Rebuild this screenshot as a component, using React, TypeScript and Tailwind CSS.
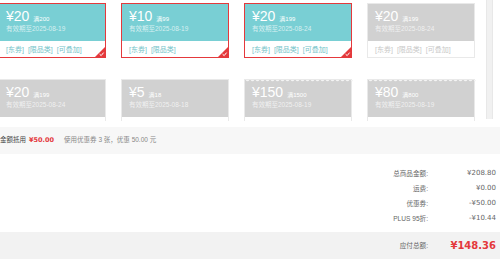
import React from "react";

type Coupon = {
  amount: string;
  cond: string;
  date: string;
  tags: string[];
  selected?: boolean;
  gray?: boolean;
  wave?: boolean;
};

const row1: Coupon[] = [
  { amount: "¥20", cond: "满200", date: "有效期至2025-08-19", tags: ["[东券]", "[限品类]", "[可叠加]"], selected: true },
  { amount: "¥10", cond: "满99", date: "有效期至2025-08-19", tags: ["[东券]", "[限品类]"], selected: true },
  { amount: "¥20", cond: "满199", date: "有效期至2025-08-24", tags: ["[东券]", "[限品类]", "[可叠加]"], selected: true },
  { amount: "¥20", cond: "满199", date: "有效期至2025-08-24", tags: ["[东券]", "[限品类]", "[可叠加]"], gray: true },
];

const row2: Coupon[] = [
  { amount: "¥20", cond: "满199", date: "有效期至2025-08-24", tags: [], gray: true },
  { amount: "¥5", cond: "满18", date: "有效期至2025-08-18", tags: [], gray: true },
  { amount: "¥150", cond: "满1500", date: "有效期至2025-08-19", tags: [], gray: true, wave: true },
  { amount: "¥80", cond: "满800", date: "有效期至2025-08-19", tags: [], gray: true, wave: true },
];

function Wave() {
  const circles = [];
  for (let i = 0; i < 23; i++) {
    circles.push(<circle key={i} cx={2.5 + i * 5} cy={-0.6} r={1.8} fill="#f4f4f4" />);
  }
  return (
    <svg className="absolute top-0 left-0" width="108" height="2" viewBox="0 0 108 2">
      {circles}
    </svg>
  );
}

function Corner() {
  return (
    <svg className="absolute bottom-0 right-0" width="10" height="10" viewBox="0 0 10 10">
      <polygon points="10,0 10,10 0,10" fill="#e4393c" />
      <polyline points="4.6,7.2 6.2,8.6 8.6,5.6" fill="none" stroke="#ffffff" strokeWidth="1" />
    </svg>
  );
}

function Card({ c }: { c: Coupon }) {
  const top = c.gray ? "bg-[#d1d1d1]" : "bg-[#79cfd4]";
  const border = c.selected ? "border-[#e4393c]" : "border-[#e9e9e9]";
  const tagColor = c.gray ? "text-[#c8c8c8]" : "text-[#74c3c9]";
  return (
    <div className={`relative w-[108px] h-[55px] shrink-0 border ${border} flex flex-col`}>
      <div className={`relative h-[37px] ${top} px-[7px] pt-[5px] text-white`}>
        {c.wave && <Wave />}
        <div className="flex items-baseline gap-[4px] leading-none">
          <span className="text-[14px]">{c.amount}</span>
          <span className="text-[6px]">{c.cond}</span>
        </div>
        <div className="text-[6.5px] mt-[3px] leading-none text-white/70">{c.date}</div>
      </div>
      <div className={`flex-1 bg-white flex items-center gap-[4px] px-[7px] text-[7px] leading-none ${tagColor}`}>
        {c.tags.map((t, i) => (
          <span key={i}>{t}</span>
        ))}
      </div>
      {c.selected && <Corner />}
    </div>
  );
}

function SumRow({ label, value }: { label: string; value: string }) {
  return (
    <div className="h-[15px] flex items-center justify-end pr-[4px]">
      <span className="text-[6.6px] text-[#666]">{label}</span>
      <span className="w-[68px] text-right text-[7px] text-[#666] font-['DejaVu_Sans',sans-serif]">{value}</span>
    </div>
  );
}

export default function App() {
  return (
    <div className="w-[500px] h-[259px] bg-white overflow-hidden font-['Liberation_Sans','Noto_Sans_CJK_SC',sans-serif]">
      <div className="flex h-[121px]">
        <div className="w-[486px] h-[121px] overflow-hidden pt-[3px]">
          <div className="flex flex-col gap-[21px] ml-[-2px]">
            <div className="flex gap-[15px]">
              {row1.map((c, i) => (
                <Card key={i} c={c} />
              ))}
            </div>
            <div className="flex gap-[15px]">
              {row2.map((c, i) => (
                <Card key={i} c={c} />
              ))}
            </div>
          </div>
        </div>
        <div className="w-[7px] h-[119px] bg-[#f1f1f1] border-x border-[#e8e8e8]" />
      </div>
      <div className="h-[6px]" />
      <div className="h-[27px] bg-[#f7f7f7] flex items-center text-[6.5px] leading-none">
        <span className="text-[#444]">金额抵用</span>
        <span className="ml-[3px] text-[#e4393c] font-bold font-['DejaVu_Sans',sans-serif]">¥50.00</span>
        <span className="ml-[10px] text-[#888]">使用优惠券 3 张，优惠 50.00 元</span>
      </div>
      <div className="pt-[12px] flex flex-col">
        <SumRow label="总商品金额:" value="¥208.80" />
        <SumRow label="运费:" value="¥0.00" />
        <SumRow label="优惠券:" value="-¥50.00" />
        <SumRow label="PLUS 95折:" value="-¥10.44" />
      </div>
      <div className="mt-[6px] h-[27px] bg-[#f2f2f2] flex items-center justify-end pr-[4px]">
        <span className="text-[6.6px] text-[#666]">应付总额:</span>
        <span className="w-[68px] text-right text-[10px] font-bold text-[#e4393c] font-['DejaVu_Sans',sans-serif]">¥148.36</span>
      </div>
    </div>
  );
}
